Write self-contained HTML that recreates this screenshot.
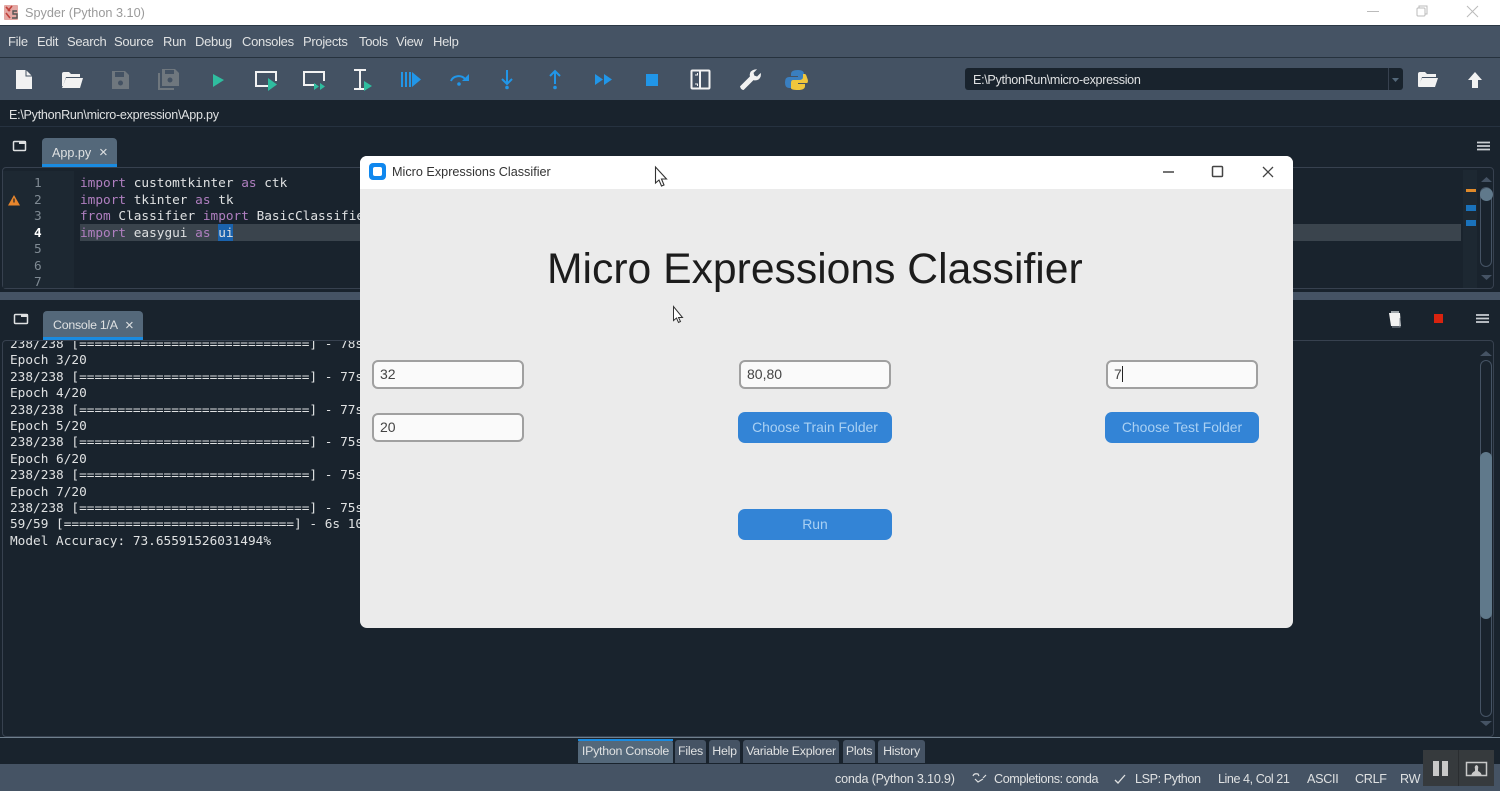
<!DOCTYPE html>
<html><head><meta charset="utf-8"><title>Spyder</title>
<style>
html,body{margin:0;padding:0;background:#19232d;}
#p{position:relative;width:1500px;height:791px;overflow:hidden;background:#19232d;font-family:"Liberation Sans",sans-serif;filter:blur(0.35px);}
.b{position:absolute;}
.t{position:absolute;white-space:nowrap;line-height:16px;}
.m{font-size:13px;letter-spacing:-0.3px;color:#dfe1e2;top:34px;}
.c{position:absolute;left:0;white-space:pre;font-family:"DejaVu Sans Mono",monospace;font-size:12.75px;line-height:16.4px;color:#dfe1e2;}
.k{color:#b07fc0}
.s{font-size:12.6px;letter-spacing:-0.3px;color:#dfe1e2;top:771px;}
.bt{position:absolute;height:23px;top:740px;background:#455364;border-radius:3px 3px 0 0;color:#dfe1e2;font-size:12.4px;letter-spacing:-0.25px;line-height:23px;text-align:center;}
.en{position:absolute;box-sizing:border-box;width:152px;height:29px;background:#fafafa;border:2px solid #a0a0a0;border-radius:6px;font-size:14px;line-height:25px;padding-left:6px;color:#444;}
.btn{position:absolute;width:154px;height:31px;background:#3384d6;border-radius:7px;color:#a9d0f3;font-size:13.9px;line-height:30px;text-align:center;}
</style></head><body><div id="p">

<!-- window title -->
<div class="b" style="left:0;top:0;width:1500px;height:25px;background:#fff;"></div>
<div class="t" style="left:25px;top:5px;font-size:12.7px;color:#9a9a9a;">Spyder (Python 3.10)</div>

<!-- menu & toolbar -->
<div class="b" style="left:0;top:25px;width:1500px;height:32px;background:#455364;border-top:1px solid #2b3845;box-sizing:border-box;"></div>
<div class="b" style="left:0;top:57px;width:1500px;height:1px;background:#26323e;"></div>
<div class="b" style="left:0;top:58px;width:1500px;height:42px;background:#445263;"></div>
<div class="t m" style="left:8px;">File</div>
<div class="t m" style="left:37px;">Edit</div>
<div class="t m" style="left:67px;">Search</div>
<div class="t m" style="left:114px;">Source</div>
<div class="t m" style="left:163px;">Run</div>
<div class="t m" style="left:195px;">Debug</div>
<div class="t m" style="left:242px;">Consoles</div>
<div class="t m" style="left:303px;">Projects</div>
<div class="t m" style="left:359px;">Tools</div>
<div class="t m" style="left:396px;">View</div>
<div class="t m" style="left:433px;">Help</div>

<!-- path combo -->
<div class="b" style="left:965px;top:68px;width:438px;height:22px;background:#19232d;border-radius:3px;"></div>
<div class="b" style="left:1388px;top:68px;width:1px;height:22px;background:#37414f;"></div>
<div class="t" style="left:973px;top:72px;font-size:12.6px;letter-spacing:-0.33px;color:#dfe1e2;">E:\PythonRun\micro-expression</div>

<!-- file path -->
<div class="t" style="left:9px;top:107px;font-size:12.6px;letter-spacing:-0.28px;color:#dfe1e2;">E:\PythonRun\micro-expression\App.py</div>
<div class="b" style="left:0;top:126px;width:1500px;height:1px;background:#263240;"></div>

<!-- editor -->
<div class="b" style="left:42px;top:138px;width:75px;height:29px;background:#54687a;border-radius:4px 4px 0 0;"></div>
<div class="b" style="left:42px;top:164px;width:75px;height:3px;background:#1a8be0;"></div>
<div class="t" style="left:52px;top:145px;font-size:12.6px;color:#dfe1e2;">App.py</div>
<div class="t" style="left:99px;top:145px;font-size:15px;color:#dfe1e2;">×</div>
<div class="b" style="left:2px;top:167px;width:1492px;height:122px;box-sizing:border-box;border:1px solid #37414f;border-radius:4px;background:#19232d;"></div>
<div class="b" style="left:3px;top:171px;width:71px;height:117px;background:#1d2832;"></div>
<div class="b" style="left:80px;top:224px;width:1381px;height:17px;background:#3a444d;"></div>
<div class="b" style="left:1463px;top:170px;width:14px;height:118px;background:#1d2832;"></div>
<div class="b" style="left:218px;top:224px;width:15px;height:17px;background:#1a62ac;"></div>
<div class="c" style="left:34px;top:176px;color:#7f8a93;">1</div>
<div class="c" style="left:34px;top:193px;color:#7f8a93;">2</div>
<div class="c" style="left:34px;top:209px;color:#7f8a93;">3</div>
<div class="c" style="left:34px;top:226px;color:#fff;font-weight:bold;">4</div>
<div class="c" style="left:34px;top:242px;color:#7f8a93;">5</div>
<div class="c" style="left:34px;top:259px;color:#7f8a93;">6</div>
<div class="c" style="left:34px;top:275px;color:#7f8a93;">7</div>
<div class="c" style="left:80px;top:176px;"><span class="k">import</span> customtkinter <span class="k">as</span> ctk</div>
<div class="c" style="left:80px;top:193px;"><span class="k">import</span> tkinter <span class="k">as</span> tk</div>
<div class="c" style="left:80px;top:209px;"><span class="k">from</span> Classifier <span class="k">import</span> BasicClassifier</div>
<div class="c" style="left:80px;top:226px;"><span class="k">import</span> easygui <span class="k">as</span> ui</div>

<!-- splitter -->
<div class="b" style="left:0;top:292px;width:1500px;height:8px;background:#455364;"></div>

<!-- console -->
<div class="b" style="left:43px;top:311px;width:100px;height:29px;background:#54687a;border-radius:4px 4px 0 0;"></div>
<div class="b" style="left:43px;top:337px;width:100px;height:3px;background:#1a8be0;"></div>
<div class="t" style="left:53px;top:317px;font-size:12.4px;letter-spacing:-0.25px;color:#dfe1e2;">Console 1/A</div>
<div class="t" style="left:125px;top:318px;font-size:15px;color:#dfe1e2;">×</div>
<div class="b" style="left:2px;top:340px;width:1492px;height:397px;box-sizing:border-box;border:1px solid #37414f;border-radius:4px;overflow:hidden;background:#19232d;">
<div class="c" style="left:7px;top:-4px;">238/238 [==============================] - 78s
Epoch 3/20
238/238 [==============================] - 77s
Epoch 4/20
238/238 [==============================] - 77s
Epoch 5/20
238/238 [==============================] - 75s
Epoch 6/20
238/238 [==============================] - 75s
Epoch 7/20
238/238 [==============================] - 75s
59/59 [==============================] - 6s 10
Model Accuracy: 73.65591526031494%</div>
</div>

<!-- scrollbars -->
<div class="b" style="left:1480px;top:187px;width:12px;height:80px;box-sizing:border-box;border:1px solid #455364;border-radius:6px;"></div>
<div class="b" style="left:1480px;top:188px;width:13px;height:13px;border-radius:7px;background:#60798b;"></div>
<div class="b" style="left:1480px;top:360px;width:12px;height:357px;box-sizing:border-box;border:1px solid #455364;border-radius:6px;"></div>
<div class="b" style="left:1480px;top:452px;width:12px;height:167px;border-radius:6px;background:#60798b;"></div>
<div class="b" style="left:1466px;top:189px;width:10px;height:3px;background:#e08a2a;"></div>
<div class="b" style="left:1466px;top:205px;width:10px;height:6px;background:#1a72bb;"></div>
<div class="b" style="left:1466px;top:220px;width:10px;height:6px;background:#1a72bb;"></div>

<!-- bottom tabs -->
<div class="b" style="left:0;top:737px;width:1500px;height:1px;background:#6f7f8d;"></div>
<div class="bt" style="left:578px;width:95px;background:#54687a;">IPython Console</div>
<div class="b" style="left:578px;top:739px;width:95px;height:2px;background:#1a8be0;"></div>
<div class="bt" style="left:675px;width:31px;">Files</div>
<div class="bt" style="left:709px;width:31px;">Help</div>
<div class="bt" style="left:743px;width:96px;">Variable Explorer</div>
<div class="bt" style="left:843px;width:32px;">Plots</div>
<div class="bt" style="left:878px;width:47px;">History</div>

<!-- status bar -->
<div class="b" style="left:0;top:764px;width:1500px;height:27px;background:#455364;"></div>
<div class="t s" style="left:835px;letter-spacing:-0.2px;">conda (Python 3.10.9)</div>
<div class="t s" style="left:994px;letter-spacing:-0.4px;">Completions: conda</div>
<div class="t s" style="left:1135px;letter-spacing:-0.4px;">LSP: Python</div>
<div class="t s" style="left:1218px;letter-spacing:-0.45px;">Line 4, Col 21</div>
<div class="t s" style="left:1307px;">ASCII</div>
<div class="t s" style="left:1355px;">CRLF</div>
<div class="t s" style="left:1400px;">RW</div>
<div class="b" style="left:1423px;top:750px;width:71px;height:36px;background:#363a3d;"></div>
<div class="b" style="left:1458px;top:750px;width:1px;height:36px;background:#2a2d30;"></div>

<!-- icons -->
<svg class="b" style="left:0;top:0;" width="1500" height="791" viewBox="0 0 1500 791">
 <!-- app icon -->
 <rect x="4" y="5" width="14" height="15" rx="1" fill="#e4a7a3"/>
 <path d="M6 7l4 4M12 6l-4 5M6 13l4 5" stroke="#c0403a" stroke-width="1.6" fill="none"/>
 <path d="M17 11h-4v3h4v4h-5" stroke="#555" stroke-width="1.4" fill="none"/>
 <!-- window controls -->
 <path d="M1367 11.500h12" stroke="#bbb" stroke-width="1"/>
 <rect x="1417" y="8" width="8" height="8" rx="1" fill="none" stroke="#bbb"/><path d="M1419 8v-2h8v8h-2" stroke="#bbb" fill="none"/>
 <path d="M1467 6l11 11M1478 6l-11 11" stroke="#bbb" stroke-width="1"/>
 <!-- new -->
 <path d="M16 70h10l6 6v13h-16z" fill="#f2f2f2"/><path d="M26 70v6h6" fill="none" stroke="#445263" stroke-width="1"/>
 <!-- open -->
 <path d="M62 74q0-2 2-2h5l2 2h9v3H66l-3 9h-1z" fill="#f2f2f2"/><path d="M66 78h17l-3 10H62z" fill="#f2f2f2"/>
 <!-- save -->
 <path d="M112 71h13l4 4v14h-17z" fill="#6f777e"/><rect x="115" y="72" width="9" height="5" fill="#445263"/><circle cx="120.500" cy="83" r="2.500" fill="#445263"/>
 <!-- save all -->
 <path d="M162 69h13l4 4v13h-17z" fill="#6f777e"/><rect x="165" y="70" width="9" height="4" fill="#445263"/><circle cx="170" cy="80" r="2.500" fill="#445263"/>
 <path d="M159 73v16h15" fill="none" stroke="#6f777e" stroke-width="2"/>
 <!-- run -->
 <path d="M213 74l11 6-11 7z" fill="#2fbd9f"/>
 <!-- run cell -->
 <path d="M268 86h-12v-14h20v9" fill="none" stroke="#f2f2f2" stroke-width="2"/><path d="M268 78l9 6.500-9 6.500z" fill="#2fbd9f"/>
 <!-- run cell advance -->
 <path d="M316 85h-12v-13h20v9" fill="none" stroke="#f2f2f2" stroke-width="2"/><path d="M314 83l5 3.500-5 3.500zM320 83l5 3.500-5 3.500z" fill="#2fbd9f"/>
 <!-- run selection -->
 <path d="M354 70h12M354 89h12M360 70v19" stroke="#f2f2f2" stroke-width="2" fill="none"/><path d="M364 81l8 5-8 5z" fill="#2fbd9f"/>
 <!-- debug -->
 <path d="M401 72h2v15h-2zM405 72h2v15h-2zM409 72h2v15h-2zM412 72l9 7.500-9 7.500z" fill="#2196e8"/>
 <!-- step -->
 <path d="M451 81a8 7 0 0 1 14-2" fill="none" stroke="#2196e8" stroke-width="2"/><path d="M469 74v7h-7z" fill="#2196e8"/><circle cx="459" cy="84" r="1.800" fill="#2196e8"/>
 <!-- step in -->
 <path d="M507 70v14M502 79l5 5 5-5" fill="none" stroke="#2196e8" stroke-width="2"/><circle cx="507" cy="87.500" r="1.800" fill="#2196e8"/>
 <!-- step out -->
 <path d="M555 84V71M550 76l5-5 5 5" fill="none" stroke="#2196e8" stroke-width="2"/><circle cx="555" cy="87.500" r="1.800" fill="#2196e8"/>
 <!-- continue -->
 <path d="M595 74l8 5.500-8 5.500zM604 74l8 5.500-8 5.500z" fill="#2196e8"/>
 <!-- stop -->
 <rect x="646" y="74" width="12" height="12" fill="#2196e8"/>
 <!-- maximize pane -->
 <rect x="691.500" y="70.500" width="18" height="18" rx="1" fill="none" stroke="#f2f2f2" stroke-width="2"/><path d="M700 70v18" stroke="#f2f2f2" stroke-width="2"/><path d="M695 75h2.500v-2M695 84h2.500v2" stroke="#f2f2f2" fill="none"/>
 <!-- wrench -->
 <path transform="translate(74 7.200) scale(0.9)" d="M740 88l11-11q-1-5 3-7 2-1 5-1l-4 4 1 3 3 1 4-4q1 4-2 7-3 2-6 1l-11 11q-3 0-4-4z" fill="#f2f2f2"/>
 <!-- python -->
 <path d="M798 70q-7 0-7 4v2h7v1h-9q-4 0-4 5.500 0 5.500 4 5.500h2v-3q0-3 4-3h6q3 0 3-3v-5q0-4-6-4z" fill="#3a7fc0"/>
 <path d="M798 90q7 0 7-4v-2h-7v-1h9q-1 0 0 0 2-1 0-5.500-1-3.500-2-3.500h-2v3q0 3-4 3h-6q-2 0-2 3v5q0 2 7 2z" fill="#f0c63c"/>
 <!-- dropdown -->
 <path d="M1392 78h7l-3.500 4z" fill="#54687a"/>
 <!-- folder right -->
 <path d="M1418 74q0-2 2-2h5l2 2h9v3h-14l-3 9h-1z" fill="#f2f2f2"/><path d="M1422 78h16l-3 9h-17z" fill="#f2f2f2"/>
 <!-- up -->
 <path d="M1475 72l7 8h-4v8h-6v-8h-4z" fill="#f2f2f2"/>
 <!-- editor pane icon -->
 <rect x="13.500" y="141.500" width="12" height="9" rx="1" fill="none" stroke="#dfe1e2" stroke-width="1.500"/><rect x="19" y="141" width="7" height="3" fill="#dfe1e2"/>
 <rect x="14.500" y="314.500" width="13" height="9" rx="1" fill="none" stroke="#dfe1e2" stroke-width="1.500"/><rect x="21" y="314" width="7" height="3" fill="#dfe1e2"/>
 <!-- hamburger -->
 <path d="M1477 142.500h13M1477 146h13M1477 149.500h13" stroke="#c9ced2" stroke-width="1.800"/>
 <path d="M1476 315h13M1476 318.500h13M1476 322h13" stroke="#c9ced2" stroke-width="1.800"/>
 <!-- warning -->
 <path d="M14 195l6 10.500H8z" fill="#e8862c"/><path d="M14 198.500v4" stroke="#19232d" stroke-width="1.200"/>
 <!-- scroll arrows -->
 <path d="M1481 182l5.500-5 5.500 5z" fill="#455364"/><path d="M1481 275h11l-5.500 5z" fill="#455364"/>
 <path d="M1480 356l6-5 6 5z" fill="#455364"/><path d="M1480 721h12l-6 5z" fill="#455364"/>
 <!-- trash -->
 <path d="M1389 313h11l1 13h-10z" fill="#f2f2f2"/><path d="M1391 312h8" stroke="#c9ced2" stroke-width="1.500"/><path d="M1400 318v9h-8" stroke="#8a929a" fill="none"/>
 <!-- red stop -->
 <rect x="1434" y="314" width="9" height="9" fill="#d9230f"/>
 <!-- status -->
 <path d="M1115 780l3 3 7-8" fill="none" stroke="#dfe1e2" stroke-width="1.300"/>
 <path d="M973 776q1-3 5-2l1 2M975 779l3 3 5-3 M986 775l-3 3" fill="none" stroke="#dfe1e2" stroke-width="1.200"/>
 <!-- overlay -->
 <rect x="1433" y="761" width="6" height="15" fill="#c8c8c8"/><rect x="1442" y="761" width="6" height="15" fill="#c8c8c8"/>
 <rect x="1466.500" y="762.500" width="20" height="13" fill="none" stroke="#c8c8c8" stroke-width="1.500"/><path d="M1471 776q1-4 4-5v-2q-1-3 1.500-4 2.500 1 1.500 4v2q3 1 4 5z" fill="#c8c8c8"/>
</svg>

<!-- dialog -->
<div class="b" style="left:360px;top:156px;width:933px;height:472px;background:#ebebeb;border-radius:7px;overflow:hidden;">
 <div class="b" style="left:0;top:0;width:933px;height:33px;background:#fff;"></div>
</div>
<div class="b" style="left:369px;top:163px;width:17px;height:17px;background:#0f87ee;border-radius:4px;"></div>
<div class="b" style="left:373px;top:167px;width:9px;height:9px;background:#fff;border-radius:2px;"></div>
<div class="t" style="left:392px;top:164px;font-size:12.65px;color:#333;">Micro Expressions Classifier</div>
<svg class="b" style="left:0;top:0;" width="1500" height="791" viewBox="0 0 1500 791">
 <path d="M1163 172h11" stroke="#444" stroke-width="1.500"/>
 <rect x="1212.500" y="166.500" width="10" height="10" rx="1" fill="none" stroke="#444" stroke-width="1.500"/>
 <path d="M1263 167l10 10M1273 167l-10 10" stroke="#444" stroke-width="1.300"/>
 <path d="M655.500 167v16l3.500-3 2.500 6 2.500-1-2.500-6h5z" fill="#fff" stroke="#333" stroke-width="1.100"/>
 <path d="M673.500 306.500v14l3-2.500 2 4.500 2-1-2-4h4z" fill="#fff" stroke="#333" stroke-width="1"/>
</svg>
<div class="t" style="left:547px;top:240.500px;font-size:42.67px;line-height:56px;color:#1c1c1c;">Micro Expressions Classifier</div>
<div class="en" style="left:372px;top:360px;">32</div>
<div class="en" style="left:739px;top:360px;">80,80</div>
<div class="en" style="left:1106px;top:360px;">7<span style="display:inline-block;width:1px;height:16px;background:#222;vertical-align:-3px;"></span></div>
<div class="en" style="left:372px;top:413px;">20</div>
<div class="btn" style="left:738px;top:412px;">Choose Train Folder</div>
<div class="btn" style="left:1105px;top:412px;">Choose Test Folder</div>
<div class="btn" style="left:738px;top:509px;">Run</div>
</div></body></html>
